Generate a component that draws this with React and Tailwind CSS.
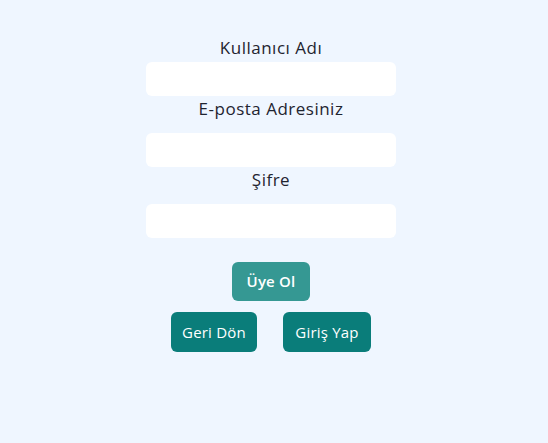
export default function App() {
  return (
    <div className="min-h-[443px] w-full bg-[#eff6ff] flex justify-center pr-[6px] pt-[36px] text-[#1f2430]" style={{ fontFamily: '"Open Sans", "Noto Sans", sans-serif' }}>
      <div className="w-[250px] flex flex-col items-center">
        <label className="text-[17px] leading-[24px] tracking-[0.5px] mb-[2px]">Kullanıcı Adı</label>
        <input className="w-full h-[34px] bg-white rounded-md outline-none px-3" />
        <label className="text-[17px] leading-[24px] tracking-[0.5px] mt-[1px] mb-[12px]">E-posta Adresiniz</label>
        <input className="w-full h-[34px] bg-white rounded-md outline-none px-3" />
        <label className="text-[17px] leading-[24px] tracking-[0.5px] mt-[1px] mb-[12px]">Şifre</label>
        <input type="password" className="w-full h-[34px] bg-white rounded-md outline-none px-3" />

        <button className="mt-6 w-[78px] h-[39px] rounded-md bg-[#359893] text-white text-[15px] font-semibold tracking-[0.2px]">Üye Ol</button>
        <div className="mt-[11px] flex gap-[26px]">
          <button className="w-[86px] h-[40px] rounded-md bg-[#0a7d7a] text-white text-[15px] font-medium tracking-[0.2px]">Geri Dön</button>
          <button className="w-[88px] h-[40px] rounded-md bg-[#0a7d7a] text-white text-[15px] font-medium tracking-[0.2px]">Giriş Yap</button>
        </div>
      </div>
    </div>
  );
}
